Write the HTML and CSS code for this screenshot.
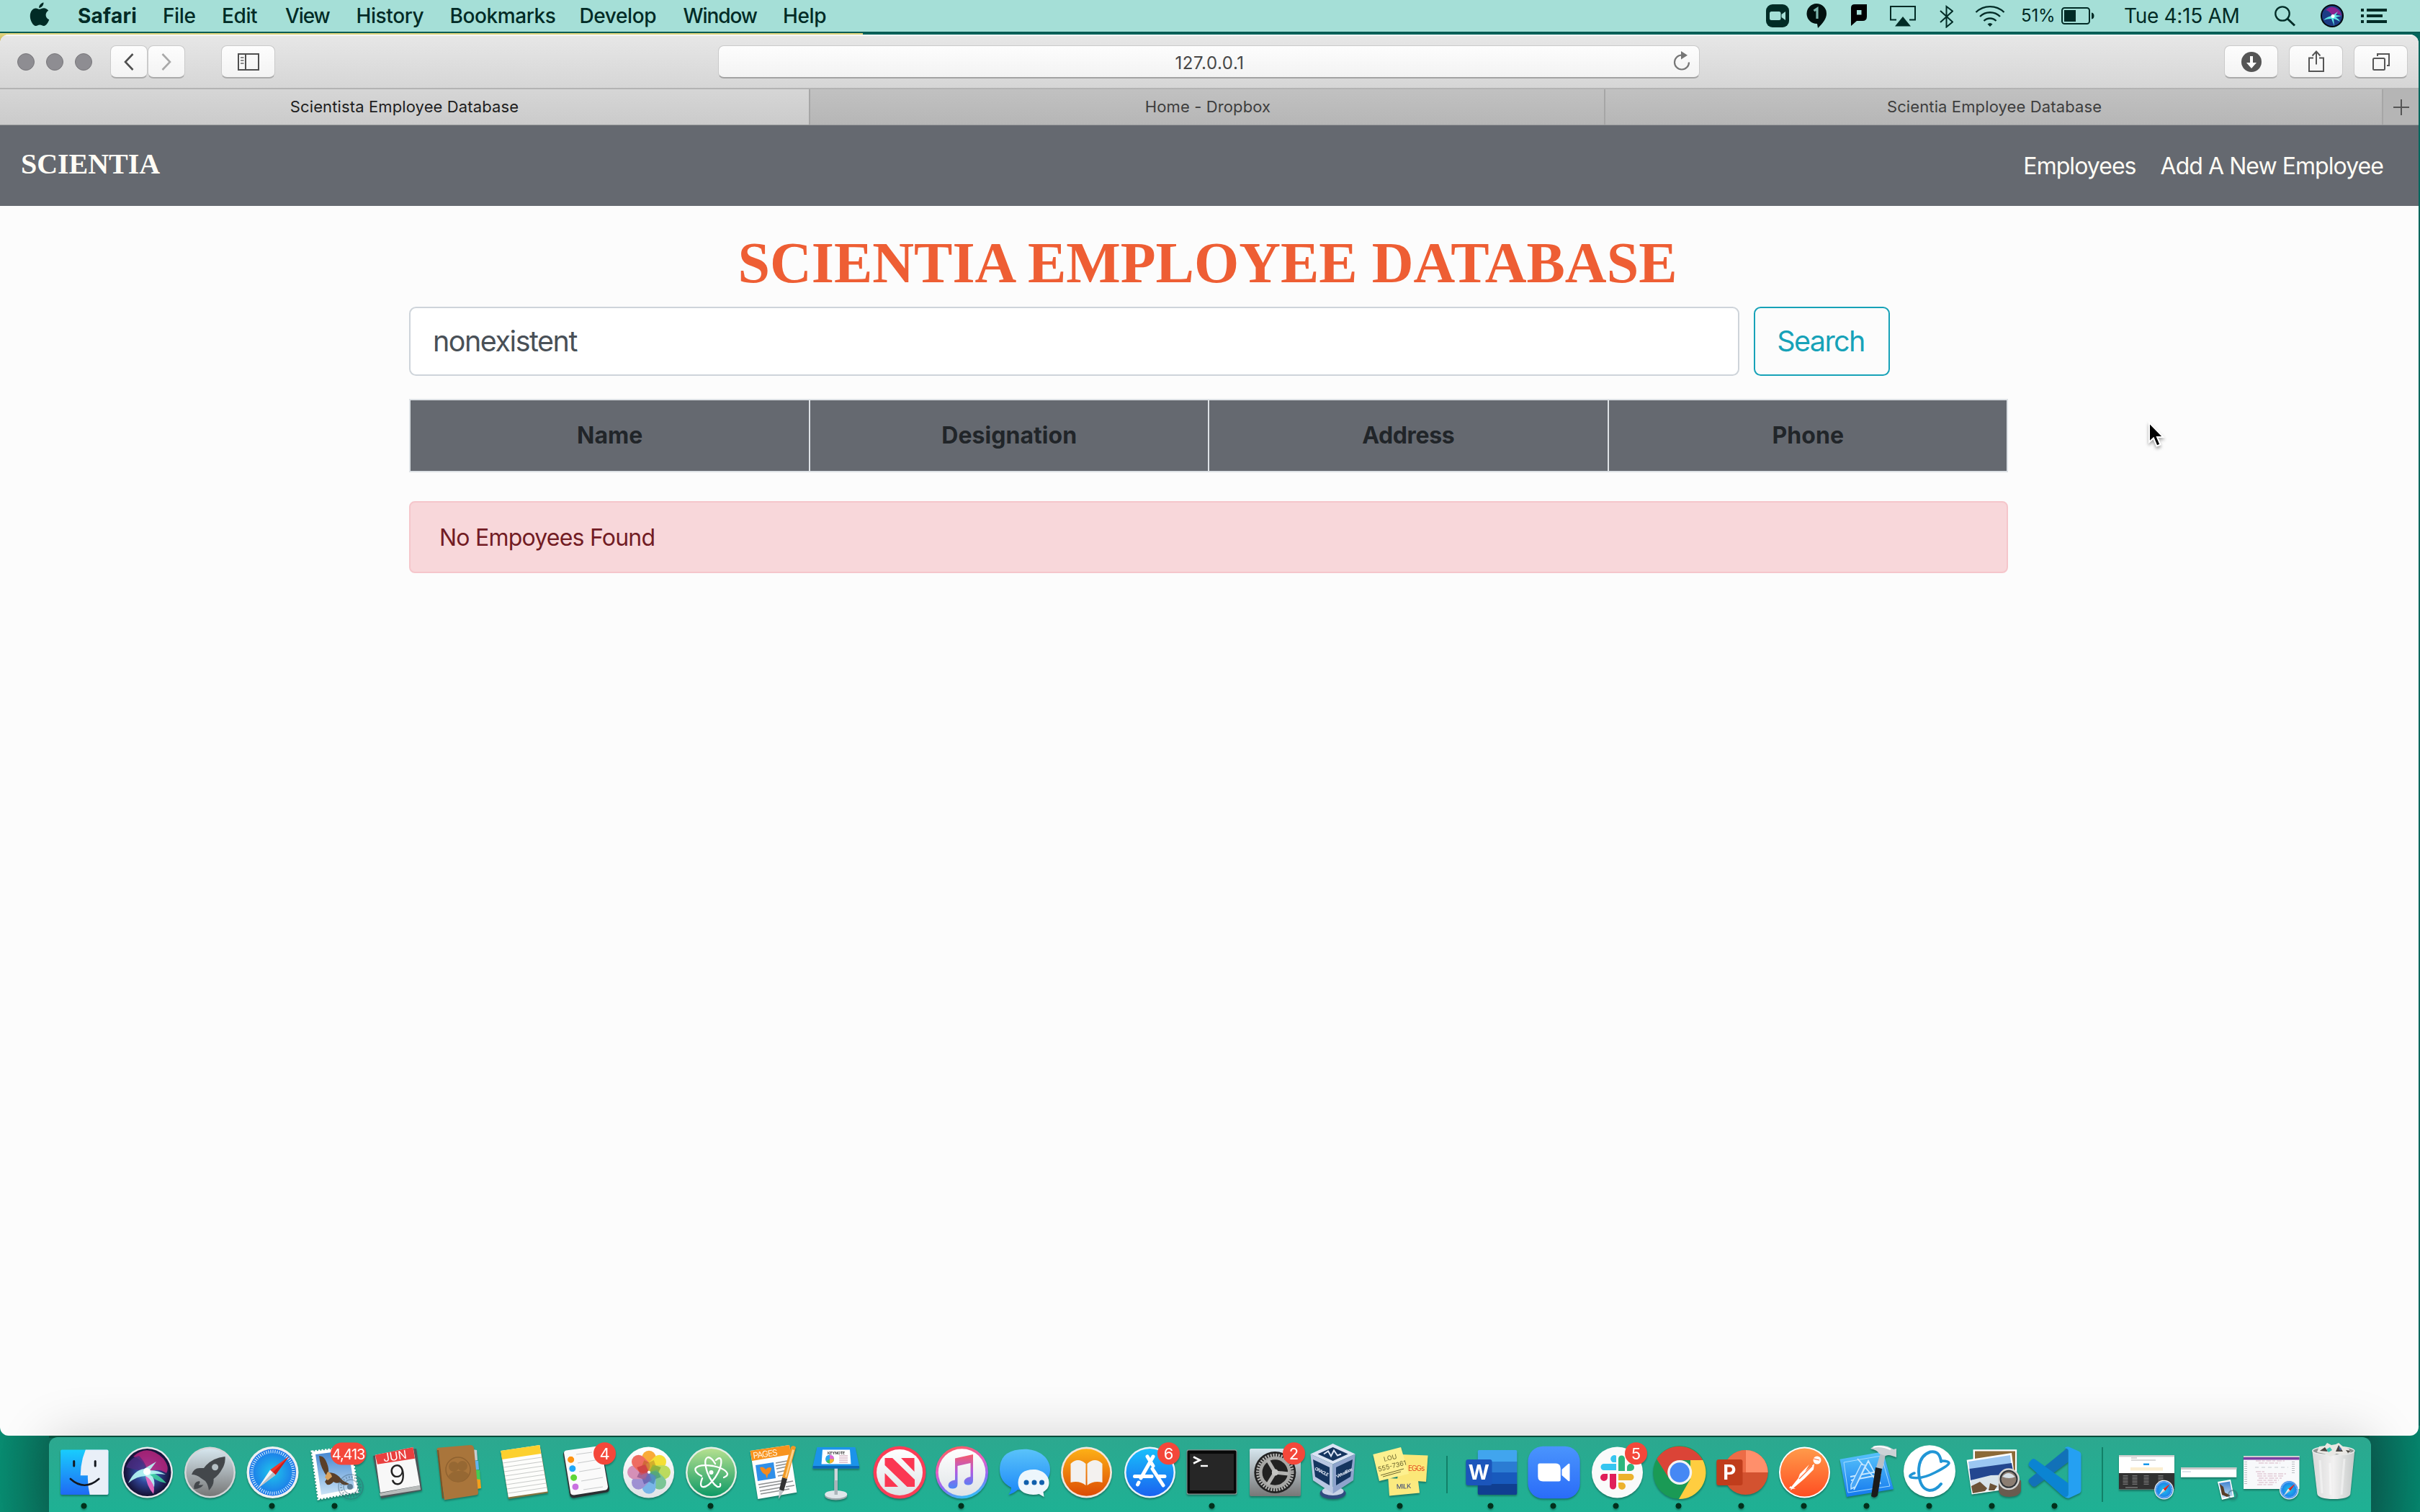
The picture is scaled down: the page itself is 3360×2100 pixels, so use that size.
FILE: index.html
```html
<!DOCTYPE html>
<html lang="en">
<head>
<meta charset="utf-8">
<title>Scientista Employee Database</title>
<link rel="stylesheet" href="styles.css">
</head>
<body>
<header class="menubar">
  <svg class="apple" width="28" height="34" viewBox="0 0 28 34"><path d="M19.500 0.500c.3 3.500-2.800 7.600-6.300 7.500C12.800 4.500 16 1 19.500.5zM14 9.800c1.500 0 3.300-1.500 6-1.500 2.200 0 4.600 1.200 6.200 3.500-5.300 3-4.500 10.400 1 12.500C26 28 23 33 20 33c-2.300 0-3-1.400-5.700-1.400S11 33 8.700 33C5 33 .8 25.800.8 19.500.8 12.500 4.600 8.400 8.600 8.400c2.400 0 3.900 1.400 5.400 1.400z" fill="#012b26"/></svg>
  <nav class="menus">
    <b class="app">Safari</b><span>File</span><span>Edit</span><span class="tight">View</span><span>History</span><span>Bookmarks</span><span>Develop</span><span class="tight">Window</span><span>Help</span>
  </nav>
  <div class="status">
    <svg width="32" height="32" viewBox="0 0 32 32"><rect width="32" height="32" rx="9" fill="#012b26"/><rect x="5" y="10" width="15.500" height="12" rx="2.500" fill="#a5dfd7"/><path d="M21.500 14l5.500-4v12l-5.500-4z" fill="#a5dfd7"/></svg>
    <svg class="s-bubble" width="28" height="34" viewBox="0 0 28 34"><path d="M14 0a14 14 0 0 1 14 14c0 7-5 13-12 20l-1-6A14 14 0 1 1 14 0z" fill="#02110f"/><path d="M10.500 10l4.500-3v14" fill="none" stroke="#7db5ad" stroke-width="3.200"/></svg>
    <svg class="s-p" width="22" height="30" viewBox="0 0 22 30"><path d="M5 0h17v17q0 6-6 6H8l-8 7V5q0-5 5-5z" fill="#000"/><rect x="8" y="8" width="6.500" height="6.500" fill="#a5dfd7"/></svg>
    <svg class="s-air" width="36" height="29" viewBox="0 0 36 29"><path d="M9 19.500H1V1h34v18.500h-8" fill="none" stroke="#012b26" stroke-width="2"/><path d="M18 15l11 13.500H7z" fill="#012b26"/></svg>
    <svg class="s-bt" width="19" height="32" viewBox="0 0 19 32"><path d="M1 8l17 15.500-8.500 7V2L18 8.500 1 24" fill="none" stroke="#012b26" stroke-width="2"/></svg>
    <svg class="s-wifi" width="42" height="30" viewBox="0 0 42 30"><g fill="none" stroke="#012b26" stroke-width="2.400"><path d="M1.500 10a28 28 0 0 1 39 0M7 16a20 20 0 0 1 28 0M12.500 22a12 12 0 0 1 17 0"/></g><path d="M17.500 26.500q3.500-3 7 0L21 30z" fill="#012b26"/></svg>
    <span class="pct">51%</span>
    <svg class="s-batt" width="46" height="24" viewBox="0 0 46 24"><rect x="1" y="1" width="38" height="22" rx="3.500" fill="none" stroke="#012b26" stroke-width="2"/><rect x="4" y="4" width="16" height="16" fill="#012b26"/><path d="M42 7.500q3.500.5 3.500 4.500T42 16.500z" fill="#012b26"/></svg>
    <span class="clock">Tue 4:15 AM</span>
    <svg class="s-find" width="29" height="29" viewBox="0 0 29 29"><circle cx="11" cy="11" r="9.700" fill="none" stroke="#012b26" stroke-width="2.300"/><path d="M18 18l10 9.500" stroke="#012b26" stroke-width="3"/></svg>
    <svg class="s-siri" width="32" height="32" viewBox="0 0 32 32"><circle cx="16" cy="16" r="16" fill="#04090f"/><circle cx="16" cy="16" r="14" fill="#1c3c86"/><path d="M7 8q8-8 17-1 5 4 5 9-5-5-13-1Q12 9 7 8z" fill="#8a2290"/><path d="M4 22q5-5 12-6l8-6-3 5 8 1-8 2q4 2 6 6-5-3-9-4l1 10-4-10q-6 0-11 2z" fill="#5fe6e4"/><circle cx="17" cy="16.500" r="2.500" fill="#fff"/></svg>
    <svg class="s-list" width="36" height="20" viewBox="0 0 36 20" fill="#012b26"><path d="M0 0h4v4H0zM8 0h28v4H8zM0 8h4v4H0zM8 8h22v4H8zM0 16h4v4H0zM8 16h28v4H8z"/></svg>
  </div>
</header>

<main class="window">
  <div class="toolbar">
    <i class="light"></i><i class="light"></i><i class="light"></i>
    <div class="tb back"><svg width="14" height="24" viewBox="0 0 14 24"><path d="M12.500 1L2 12l10.500 11" fill="none" stroke="#4f4f4f" stroke-width="2.600"/></svg></div>
    <div class="tb fwd"><svg width="14" height="24" viewBox="0 0 14 24"><path d="M1.500 1L12 12 1.500 23" fill="none" stroke="#a9a9a9" stroke-width="2.600"/></svg></div>
    <div class="tb side"><svg width="30" height="24" viewBox="0 0 30 24"><path d="M1 1h28v22H1zM11 1v22" fill="none" stroke="#4f4f4f" stroke-width="2"/><path d="M4 6h4.500M4 10h4.500M4 14h4.500" stroke="#8a8a8a" stroke-width="2"/></svg></div>
    <div class="url"><span>127.0.0.1</span>
      <svg width="24" height="28" viewBox="0 0 24 28"><path d="M12 5.500A10 10 0 1 0 22 15.500" fill="none" stroke="#767676" stroke-width="2.200"/><path d="M11 0l9 5.700-9 5.700z" fill="#767676"/></svg></div>
    <div class="tb act dl"><svg width="28" height="28" viewBox="0 0 28 28"><circle cx="14" cy="14" r="14" fill="#555"/><path d="M12 6h4v9h5l-7 8-7-8h5z" fill="#fff"/></svg></div>
    <div class="tb act"><svg class="share" width="22" height="30" viewBox="0 0 22 30"><path d="M7 10.500H1V29h20V10.500h-6M11 19.500V2M5.500 7.500L11 1.500l5.500 6" fill="none" stroke="#555" stroke-width="2"/></svg></div>
    <div class="tb act"><svg width="24" height="24" viewBox="0 0 24 24"><g fill="none" stroke="#555" stroke-width="2"><rect x="1" y="7" width="16" height="16" rx="1.500"/><path d="M7 4V1h16v16h-3"/></g></svg></div>
  </div>
  <div class="tabs">
    <div class="tab on">Scientista Employee Database</div>
    <div class="tab">Home - Dropbox</div>
    <div class="tab last">Scientia Employee Database</div>
    <div class="plus"><svg width="22" height="22" viewBox="0 0 22 22"><path d="M11 0v22M0 11h22" stroke="#555" stroke-width="2"/></svg></div>
  </div>
  <nav class="navbar">
    <a class="brand">SCIENTIA</a>
    <a class="link">Employees</a><a class="link add">Add A New Employee</a>
  </nav>
  <section class="page">
    <h1>SCIENTIA EMPLOYEE DATABASE</h1>
    <form class="search"><div class="field">nonexistent</div><div class="btn">Search</div></form>
    <div class="thead"><div class="wide">Name</div><div class="wide">Designation</div><div>Address</div><div class="wide">Phone</div></div>
    <div class="alert">No Empoyees Found</div>
  </section>
  <svg class="cursor" width="30" height="42" viewBox="0 0 30 42"><path d="M3 2v27l6-5.500 4.500 11 5-2-4.500-10.500h8.500z" fill="#000" stroke="#fff" stroke-width="2"/></svg>
</main>

<footer class="dock">
  <svg class="defs" width="0" height="0">
    <defs>
      <linearGradient id="fb" x2="0" y2="1"><stop stop-color="#19cdfd"/><stop offset="1" stop-color="#1f6af5"/></linearGradient>
      <linearGradient id="gray" x2="0" y2="1"><stop stop-color="#d6e6ee"/><stop offset="1" stop-color="#777"/></linearGradient>
      <linearGradient id="atomg" x2="0" y2="1"><stop stop-color="#b5e08f"/><stop offset="1" stop-color="#0e9a66"/></linearGradient>
      <linearGradient id="musicg" x1=".3" x2=".6" y2="1"><stop stop-color="#fb5c5c"/><stop offset=".4" stop-color="#e560c8"/><stop offset=".7" stop-color="#8a6bf6"/><stop offset="1" stop-color="#2fc3f5"/></linearGradient>
      <linearGradient id="noteg" x2="0" y2="1"><stop stop-color="#f75a68"/><stop offset=".5" stop-color="#b05be0"/><stop offset="1" stop-color="#4a86f7"/></linearGradient>
      <linearGradient id="msg" x2="0" y2="1"><stop stop-color="#5ac3fa"/><stop offset="1" stop-color="#1b87f8"/></linearGradient>
      <linearGradient id="bookg" x2="0" y2="1"><stop stop-color="#fdb016"/><stop offset="1" stop-color="#dc4b04"/></linearGradient>
      <linearGradient id="store" x2="0" y2="1"><stop stop-color="#18bffb"/><stop offset="1" stop-color="#1a62f0"/></linearGradient>
      <linearGradient id="white" x2="0" y2="1"><stop stop-color="#fff"/><stop offset="1" stop-color="#dfe3e6"/></linearGradient>
      <linearGradient id="post" x2="0" y2="1"><stop stop-color="#ff9a4a"/><stop offset="1" stop-color="#ff4e22"/></linearGradient>
      <linearGradient id="xc" x2="0" y2="1"><stop stop-color="#58c4fb"/><stop offset="1" stop-color="#1478ee"/></linearGradient>
      <linearGradient id="zm" x2="0" y2="1"><stop stop-color="#4a94fd"/><stop offset="1" stop-color="#2a6cf8"/></linearGradient>
      <linearGradient id="sky" x2="0" y2="1"><stop stop-color="#3f83cf"/><stop offset="1" stop-color="#c9e2f5"/></linearGradient>
      <linearGradient id="bin" x2="1" y2="0"><stop stop-color="#d8d8d8"/><stop offset=".5" stop-color="#f2f1f1"/><stop offset="1" stop-color="#c5c9c8"/></linearGradient>
      <radialGradient id="comp"><stop stop-color="#1fc6ec"/><stop offset="1" stop-color="#1c74e8"/></radialGradient>
      <radialGradient id="sb"><stop stop-color="#4fb6d6"/><stop offset=".45" stop-color="#31469a"/><stop offset="1" stop-color="#141033"/></radialGradient>
      <g id="siri"><circle cx="43.500" cy="49" r="35.500" fill="#e8e8ee"/><circle cx="43.500" cy="49" r="33" fill="url(#sb)"/><path d="M24 27Q44 8 66 30q9 12 4 20Q58 42 44 49 38 30 24 27z" fill="#c2247e" opacity=".8"/><path d="M14 42Q20 28 32 26q10 10 12 23-16-4-30-7z" fill="#4b2a80" opacity=".8"/><path d="M70 64Q56 48 42 48q12 14 28 16z" fill="#3fe0a0" opacity=".8"/><path d="M40 48q2 20 12 31 4-14-10-31z" fill="#f56ac4" opacity=".9"/><path d="M17 64q8-18 22-20l17-10-9 12q12 0 22 6-14-2-22 0 8 4 6 18-4-12-12-16-12 0-24 10z" fill="#b9fbf6" opacity=".9"/><circle cx="43" cy="48" r="5" fill="#fff"/></g>
      <g id="compass"><circle cx="43.500" cy="49" r="36" fill="#eef0f2"/><circle cx="43.500" cy="49" r="32.500" fill="url(#comp)"/><circle cx="43.500" cy="49" r="29" fill="none" stroke="#d6efff" stroke-width="4.500" stroke-dasharray="1.100 1.930"/><path d="M66 27L40 45.500l7.500 7z" fill="#f2372d"/><path d="M66 27L43.700 49l3.800 3.500z" fill="#c81f1d"/><path d="M23 71l17-25.500 7.500 7z" fill="#f4f4f4"/><path d="M23 71l20.700-22 3.800 3.500z" fill="#b9bec4"/></g>
      <g id="stamp"><path d="M11 20l54-6 10 62-55 10z" fill="#fff" stroke="#fff" stroke-width="3" stroke-dasharray="2.500 2"/><path d="M16 24l46-6 8 53-46 9z" fill="url(#sky)"/><path d="M21 26q6 0 9 6 5 10 4 17 9 0 15 6 5 6 8 7l6 3q-7 4-13-2-6 2-9-1-4 5-9 4l-3-4 4-6Q22 42 21 26z" fill="#5a3f28"/><path d="M33 48q5 2 6 7l-6 5-4-4z" fill="#d8a35f"/></g>
    </defs>
  </svg>
  <div class="apps">
    <svg class="ic run" viewBox="0 0 87 104"><rect x="10" y="17.500" width="66.500" height="62.500" rx="2" fill="url(#fb)"/><path d="M44.800 17.500q-7 17-7.100 35.800h10.200q-.5 14 2.700 26.700H74.500q2 0 2-2v-58.500q0-2-2-2z" fill="#e9eff8"/><path d="M28.700 33.500v6.500M58.200 33.500v6.500" stroke="#14181f" stroke-width="3" stroke-linecap="round"/><path d="M23.800 58q19.500 17.500 39.500 0" fill="none" stroke="#14181f" stroke-width="2.600" stroke-linecap="round"/></svg>
    <svg class="ic" viewBox="0 0 87 104"><use href="#siri"/></svg>
    <svg class="ic" viewBox="0 0 87 104"><circle cx="43.500" cy="49" r="35.500" fill="#d3d6d8"/><circle cx="43.500" cy="49" r="33" fill="url(#gray)"/><path d="M64.500 27q1 9-4 17-4 8-12 14 1 9-6.500 16-1-8-5-13l-6-4q-6-5-13-5 3-9 11-9h6q10-14 29.500-16z" fill="#43474b"/><path d="M29 61q-9 1-7.500 11 9 0 13-6-4 1-7 0 3-2 1.500-5z" fill="#43474b"/><circle cx="50.600" cy="41.700" r="4.500" fill="#b5bfc4"/></svg>
    <svg class="ic run" viewBox="0 0 87 104"><use href="#compass"/></svg>
    <svg class="ic run" viewBox="0 0 87 104"><use href="#stamp"/><g fill="none" stroke="#3b5a70" opacity=".4"><circle cx="65" cy="69" r="17" stroke-width="1.500"/><circle cx="65" cy="69" r="10" stroke-width="1.500"/><circle cx="65" cy="69" r="13.500" stroke-width="3" stroke-dasharray="2 2"/></g><circle cx="64" cy="69" r="4" fill="#3b5a70" opacity=".7"/><rect x="37" y="7.500" width="49.500" height="31" rx="15.500" fill="#f4473a"/><text class="badge four" x="61.500" y="30.500">4,413</text></svg>
    <svg class="ic" viewBox="0 0 87 104"><path d="M9 26l60-10 8 58-57 11z" fill="#4c5558"/><path d="M18 78l56-11 1 6-56 9z" fill="#b9bcbb"/><path d="M11.800 24.700L64.500 14 74 67l-55 10z" fill="#f8f8f8"/><path d="M11.800 24.700L64.500 14 67 29.700 15 37.700z" fill="#e9403f"/><text class="jun" x="40" y="32" transform="rotate(-9 40 32)">JUN</text><text class="nine" x="44" y="66" transform="rotate(-5 44 66)">9</text></svg>
    <svg class="ic" viewBox="0 0 87 104"><path d="M60 17l6 1 1 14-6 1z" fill="#c9ccd0"/><path d="M62 32l6 1 1 12-6 1z" fill="#63b4ee"/><path d="M63 45l7 1 1 13-6 1z" fill="#45cc53"/><path d="M64 58l7 1 1 12-6 1z" fill="#f2a11c"/><path d="M10.400 17q0-2 2-2.300L57 11q4 0 5 4l6 62q0 3-3 3.500L21 87.300z" fill="#a9753b"/><path d="M12 18l7 67" stroke="#7c5326" stroke-width="2"/><g fill="#966833"><circle cx="40" cy="45" r="17" fill="none" stroke="#8f6230" stroke-width="1.500"/><circle cx="34" cy="41" r="7"/><circle cx="46" cy="40" r="7"/><path d="M26 55q4-8 14-8 10-1 15 5-6 10-15 10-9 0-14-7z"/></g></svg>
    <svg class="ic" viewBox="0 0 87 104"><path d="M13 22l54-9 11 64.500-55 8.500z" fill="#857440"/><path d="M12.300 19l54-8 11 64.500-54.500 8z" fill="#fdfdfb"/><path d="M12.300 19l54-8 1.700 12-54 8z" fill="#fcd02e"/><path d="M15 36l54-8M16 42l54-8M17 48l54-8M18 54l54-8M19 60l54-8M20 66l54-8M21 72l54-8M22 78l54-8" stroke="#c9cbc9" stroke-width="1.200"/></svg>
    <svg class="ic" viewBox="0 0 87 104"><path d="M12 24q0-4 3-4.500l46-6q4 0 5 4l10 54q0 4-3 5l-46 8q-5 0-6-4z" fill="#2c2f32"/><path d="M13 22q0-3 3-3.500l44-6q4 0 5 4l9 52q0 4-3 5l-44 7q-5 0-5-4z" fill="#fafafa"/><g stroke="#fff"><circle cx="22.600" cy="31.300" r="5" fill="#fd9312"/><circle cx="24.800" cy="43.700" r="5" fill="#1fa8f7"/><circle cx="26.600" cy="56.300" r="5" fill="#5fd636"/><circle cx="28.900" cy="69" r="5" fill="#c970e0"/></g><path d="M32 36l30-5M34 48l30-5M37 61l30-5M40 73l27-4M30 24l22-3" stroke="#c8cacb" stroke-width="1.200"/><circle cx="69.500" cy="22.800" r="15.500" fill="#f4473a"/><text class="badge" x="69.500" y="31">4</text></svg>
    <svg class="ic" viewBox="0 0 87 104"><circle cx="43.500" cy="49" r="35.500" fill="url(#white)"/><g transform="translate(44 48.700)" opacity=".88"><rect x="-9.500" y="-30" width="19" height="28" rx="9.500" fill="#f9a01e"/><rect x="-9.500" y="-30" width="19" height="28" rx="9.500" fill="#f5dc1b" transform="rotate(45)"/><rect x="-9.500" y="-30" width="19" height="28" rx="9.500" fill="#b5d84a" transform="rotate(90)"/><rect x="-9.500" y="-30" width="19" height="28" rx="9.500" fill="#6cc08a" transform="rotate(135)"/><rect x="-9.500" y="-30" width="19" height="28" rx="9.500" fill="#6aaee8" transform="rotate(180)"/><rect x="-9.500" y="-30" width="19" height="28" rx="9.500" fill="#9585cf" transform="rotate(225)"/><rect x="-9.500" y="-30" width="19" height="28" rx="9.500" fill="#d283b0" transform="rotate(270)"/><rect x="-9.500" y="-30" width="19" height="28" rx="9.500" fill="#ee5a4e" transform="rotate(315)"/><g opacity=".6"><path d="M0 0L-8-9 0-18 8-9z" fill="#b85400" transform="rotate(-22)"/><path d="M0 0L-8-9 0-18 8-9z" fill="#b8830b" transform="rotate(22)"/><path d="M0 0L-8-9 0-18 8-9z" fill="#5d8b10" transform="rotate(68)"/><path d="M0 0L-8-9 0-18 8-9z" fill="#268a55" transform="rotate(112)"/><path d="M0 0L-8-9 0-18 8-9z" fill="#22679a" transform="rotate(158)"/><path d="M0 0L-8-9 0-18 8-9z" fill="#3b3a95" transform="rotate(202)"/><path d="M0 0L-8-9 0-18 8-9z" fill="#763070" transform="rotate(248)"/><path d="M0 0L-8-9 0-18 8-9z" fill="#b50e18" transform="rotate(292)"/></g></g><circle cx="44" cy="48.700" r="2" fill="#fff"/></svg>
    <svg class="ic run" viewBox="0 0 87 104"><circle cx="43.500" cy="49" r="35.500" fill="#e3efe4"/><circle cx="43.500" cy="49" r="33" fill="url(#atomg)"/><g fill="none" stroke="#fff" stroke-width="2.300" stroke-linecap="round"><path d="M30 54Q20 49 21.500 43.500 26 37 46 40q18 4 20 11 0 3-5 5"/><path d="M50 32q5-5 7-1 2 10-8 25-11 15-18 13-4-2 0-12"/><path d="M56 65q1 5-4 4-8-5-14-20-6-19 1-21 5 0 10 9"/></g><circle cx="43.500" cy="49" r="3" fill="#fff"/></svg>
    <svg class="ic" viewBox="0 0 87 104"><path d="M10.600 19L65 11l10.300 65.700L21.300 86z" fill="#fdfdfd"/><path d="M10.600 19L65 11l2 13-54 9z" fill="#f8931d"/><text class="pages" x="15" y="30" transform="rotate(-8 15 30)">PAGES</text><path d="M18 39l25-4 3 22-25 4z" fill="#2f8fe8"/><path d="M24 42q5-2 8 3 4-5 8-2-1 7-5 9l-1 6-2-6q-6-2-8-10z" fill="#f68a1b"/><path d="M46 36l16-3M46 40l16-3M47 44l14-3M48 49l13-3M49 54l11-2M22 66l36-6M23 70l34-6M25 79l40-7M24 75l28-5M60 69l12-2M60 63l10-2" stroke="#8c8f90" stroke-width="1.300"/><path d="M67 14q3-4 7 0L62 58l-7-2z" fill="#f09a26"/><path d="M69 17l3 1-11 38-2-1z" fill="#ffd08a"/><path d="M55 56l7 2-5 17-6-2z" fill="#333"/><path d="M51 73l6 2-7 11z" fill="#c0c4c8"/></svg>
    <svg class="ic" viewBox="0 0 87 104"><path d="M40.500 43h4.500v37h-4.500z" fill="#cfd6da"/><ellipse cx="42.700" cy="81.500" rx="15.500" ry="6" fill="#9aa7ac"/><ellipse cx="42.700" cy="79.500" rx="15.500" ry="5.500" fill="#dfe6ea"/><path d="M40.500 60h4.500v20h-4.500z" fill="#aab4ba"/><path d="M16.400 14h53L75 40v3.500H10.600V40z" fill="#1b93ea"/><path d="M10.600 40H75v3.500H10.600z" fill="#0b66b6"/><path d="M24 17.500h38l1.500 20h-41z" fill="#fff"/><text class="key" x="43" y="24">KEYNOTE</text><circle cx="34" cy="30.500" r="6" fill="#2ca7ee"/><path d="M34 30.500v-6a6 6 0 0 1 6 6z" fill="#e566d0"/><path d="M34 30.500h6a6 6 0 0 1-6 6z" fill="#f7b52a"/><path d="M34 30.500v6a6 6 0 0 1-5-3z" fill="#3cc65a"/><path d="M47 26h12M47 29h12M47 32h12M47 35h12" stroke="#d9b9c9" stroke-width="1.300"/></svg>
    <svg class="ic" viewBox="0 0 87 104"><circle cx="44" cy="49" r="36.500" fill="#fb3d57"/><circle cx="44" cy="49" r="32" fill="url(#white)"/><path d="M23.500 29h10.500l31 30v10H54.500l-31-30zM46 29h18.500v19zM23.500 50v19H42z" fill="#fb3752"/></svg>
    <svg class="ic run" viewBox="0 0 87 104"><circle cx="43.500" cy="49" r="36.500" fill="url(#musicg)"/><circle cx="43.500" cy="49" r="32.800" fill="url(#white)"/><path d="M34 29.500l25-5.500v36q0 6-6 6.500-6 .5-6.500-4 0-6 9-7.500V36l-18 4v25q0 6-6 6.500-6.500.5-7-4.500 0-6 9.500-7.500z" fill="url(#noteg)"/></svg>
    <svg class="ic" viewBox="0 0 87 104"><path d="M43.700 16.700C63 16.700 79 28 79 45S64 74 44 74q-5 0-10-1-5 5-13 7 4-5 4-10Q9 62 9 45 9 17 43.700 16.700z" fill="url(#msg)"/><path d="M56 45c12 0 21.500 8 21.500 18 0 7-4 11-8 13l1 7-7-4q-3 1-8 1-21-1-21-17 1-18 21.500-18z" fill="#edf6fc"/><g fill="#1160ad"><circle cx="46" cy="63" r="3.500"/><circle cx="57" cy="63" r="3.500"/><circle cx="67.500" cy="63" r="3.500"/></g></svg>
    <svg class="ic" viewBox="0 0 87 104"><circle cx="42.500" cy="49" r="35.500" fill="#f1e6dc"/><circle cx="42.500" cy="49" r="32.800" fill="url(#bookg)"/><path d="M20.500 37q10-10 21 0v30q-9-7-21-4zM43.500 37q11-10 21 0v26q-12-3-21 4z" fill="#f3f1ef"/></svg>
    <svg class="ic" viewBox="0 0 87 104"><circle cx="43.500" cy="49" r="35.500" fill="#eaf2fa"/><circle cx="43.500" cy="49" r="33" fill="url(#store)"/><g stroke="#fff" stroke-width="5" stroke-linecap="round"><path d="M48 27L31 57M28 63l-1.500 3M40 27l8 13M47 44l15 23M22.500 54.500H46M56 54.500h8"/></g><circle cx="69.500" cy="22.800" r="15.500" fill="#f4473a"/><text class="badge" x="69.500" y="31">6</text></svg>
    <svg class="ic run" viewBox="0 0 87 104"><rect x="7.500" y="17.300" width="70" height="62.500" rx="2.500" fill="#8b9190"/><rect x="8.500" y="18.500" width="68" height="60" rx="2" fill="#080808"/><rect x="12" y="23" width="61" height="51" fill="#262626"/><path d="M17 27.500l9 4.500-9 4.500" fill="none" stroke="#fff" stroke-width="2.600"/><path d="M27 40h10" stroke="#fff" stroke-width="2.400"/></svg>
    <svg class="ic" viewBox="0 0 87 104"><rect x="8" y="16" width="71" height="66" rx="2" fill="url(#gray)"/><circle cx="43.300" cy="49" r="29" fill="#222"/><circle cx="43.300" cy="49" r="24" fill="none" stroke="#b3b3b1" stroke-width="4.500" stroke-dasharray="2.200 1.570"/><circle cx="43.300" cy="49" r="20" fill="none" stroke="#a7a7a5" stroke-width="4.500"/><path d="M43.300 49l19 2M43.300 49l-10-17M43.300 49L33 66" stroke="#b3b3b1" stroke-width="5"/><circle cx="43.300" cy="49" r="4.500" fill="#c4c4c2"/><circle cx="69.500" cy="22.800" r="15.500" fill="#f4473a"/><text class="badge" x="69.500" y="31">2</text></svg>
    <svg class="ic" viewBox="0 0 87 104"><ellipse cx="36.600" cy="78" rx="18" ry="8" fill="#314c80"/><ellipse cx="36.600" cy="75" rx="15" ry="6" fill="#c9d3e6"/><path d="M36.600 9l31 14.500-31 14L5.500 23.500z" fill="#dbe4f4"/><path d="M5.500 23.500l31.100 14v41L9 60z" fill="#b9c7e2"/><path d="M67.600 23.500l-31 14v41L65 60z" fill="#8ea3cc"/><path d="M36.600 14l21 9.500-21 9.500-21-9.500z" fill="#15355f"/><path d="M24 23.500l6-4 4 7 4-8 5 7 5-2" fill="none" stroke="#dbe4f4" stroke-width="2"/><path d="M9 31l23 11v25L12 55zM64 31L41 42v25l20-12z" fill="#15355f"/><text class="vb" x="11" y="45" transform="rotate(28 11 45)">ORACLE</text><text class="vb" x="42.500" y="57" transform="rotate(-27 42.500 57)">VirtualBox</text></svg>
    <svg class="ic run" viewBox="0 0 87 104"><path d="M26.300 57l41.500 2 2.200 18.500-42 4z" fill="#fbea80"/><path d="M43 24l38.500 1.500L79 62l-40-3z" fill="#fbe778"/><path d="M5.300 24L44 14l11 37-41 10z" fill="#fdf08f"/><g class="scrawl"><text x="21" y="34" transform="rotate(-14 21 34)">LOU</text><text x="13" y="48" transform="rotate(-14 13 48)">555-7361</text><text class="red" x="54" y="47">EGGs</text><text class="blue" x="38" y="72" transform="rotate(-3 38 72)">MILK</text></g><path d="M16 53l32-9M19 55l25-7" stroke="#6d652d"/></svg>
  </div>
  <i class="sep short"></i>
  <div class="apps second">
    <svg class="ic run" viewBox="0 0 87 104"><path d="M26.800 18h50.500q2 0 2 2v14H24.800V20q0-2 2-2z" fill="#41a5ee"/><path d="M24.800 34h54.500v15H24.800z" fill="#2b7cd3"/><path d="M24.800 49h54.500v16H24.800z" fill="#185abd"/><path d="M24.800 65h54.500v13q0 2-2 2H26.800q-2 0-2-2z" fill="#103f91"/><rect x="8.300" y="31" width="36.200" height="36" rx="3" fill="#1b55bb"/><text class="office" x="26.400" y="58.500">W</text></svg>
    <svg class="ic run" viewBox="0 0 87 104"><rect x="7.400" y="12.700" width="72.300" height="72.600" rx="21" fill="url(#zm)"/><path d="M21.300 39q0-2.500 2.500-2.500h22q7 0 7 7V59q0 2.500-2.500 2.500h-22q-7 0-7-7zM54.500 45l9-8q2-1 2 1v22q0 2-2 1l-9-8z" fill="#fff"/></svg>
    <svg class="ic run" viewBox="0 0 87 104"><circle cx="44.500" cy="49" r="35.500" fill="#fafafa"/><g><path d="M43 25.700a5 5 0 1 0-5 9.300h5zM26 37h17v9H26a4.500 4.500 0 0 1 0-9z" fill="#36c5f0"/><path d="M46 30a4.500 4.500 0 0 1 9 0v17h-9zM58 47h5a5 5 0 1 0-5-5z" fill="#2eb67d"/><path d="M46 51h17a4.500 4.500 0 0 1 0 9H46zM46 63h5a5 5 0 1 1-5 5z" fill="#ecb22e"/><path d="M34 51h9v17a4.500 4.500 0 0 1-9 0zM31 51v5a5 5 0 1 1-5-5z" fill="#e01e5a"/></g><circle cx="70.500" cy="22.800" r="15.500" fill="#f4473a"/><text class="badge" x="70.500" y="31">5</text></svg>
    <svg class="ic run" viewBox="0 0 87 104"><circle cx="44.200" cy="49" r="37" fill="#1a9a55"/><path d="M44.200 49L12.200 30.500A37 37 0 0 1 76.200 32H44.200z" fill="#db4437"/><path d="M12.200 30.500l17.300 27 8-15z" fill="#db4437"/><path d="M76.300 32A37 37 0 0 1 43 86l16-28V32z" fill="#ffcd40"/><circle cx="44.200" cy="49" r="17" fill="#f4f4f4"/><circle cx="44.200" cy="49" r="13.700" fill="#4688f4"/></svg>
    <svg class="ic run" viewBox="0 0 87 104"><circle cx="48.700" cy="49" r="31" fill="#d35230"/><path d="M48.700 18a31 31 0 0 1 31 31h-31z" fill="#ff8f6b"/><path d="M48.700 18a31 31 0 0 0-31 31h31z" fill="#ed6c47"/><rect x="8.300" y="31" width="36.200" height="36" rx="3" fill="#c03d1c"/><text class="office" x="26.400" y="58.500">P</text></svg>
    <svg class="ic run" viewBox="0 0 87 104"><circle cx="43.500" cy="49" r="35.500" fill="#fff"/><circle cx="43.500" cy="49" r="33.500" fill="url(#post)"/><circle cx="61" cy="32" r="5.500" fill="#fff"/><path d="M57 37l-19 16-12 15-2 6 5-4 14-12 13-13zM50 38l-13 13-3 8 6-4zM24 68l-2 3 9 1z" fill="#fff"/><path d="M54 40L36 58M56 30l8 2" stroke="#ff6c36" stroke-width="1.200"/></svg>
    <svg class="ic run" viewBox="0 0 87 104"><path d="M5.500 30.700l60-10.500 14.500 52L15 83z" fill="url(#xc)"/><path d="M11 35l52-9 12 42-58 9z" fill="none" stroke="#a8dcff"/><path d="M25 73l20-40 17 32M30 30l30 34M20 55l42-8M21 60l42-8" fill="none" stroke="#c4e7ff" stroke-width="1.800"/><path d="M35 38l6 1-14 30-6 3 0-6z" fill="#49a6f5" stroke="#c4e7ff" stroke-width="1.400"/><path d="M62 22l7 2-4 20-9-2z" fill="#b9c0c6"/><path d="M55 42l9 2-6 37q-4 5-9 1z" fill="#1b1b1b"/><path d="M48 16q8-7 24-3l8 4 4-1v12l-6-2q-5-2-9 0l-9-3q-2-5-12-7z" fill="#cdd2d6"/><path d="M52 14q10-3 24 3" fill="none" stroke="#fff" stroke-width="2"/></svg>
    <svg class="ic run" viewBox="0 0 87 104"><circle cx="43" cy="47.300" r="36" fill="#fff"/><path d="M59 34Q57 18 44 20.500 28 26 28 48q1 24 15 26 9 0 16-9" fill="none" stroke="#2196d6" stroke-width="4" stroke-linecap="round"/><path d="M22 50q-10 4-4 6 14 3 33-7 18-9 19-13 0-3-10-3" fill="none" stroke="#2196d6" stroke-width="3.600" stroke-linecap="round"/></svg>
    <svg class="ic run" viewBox="0 0 87 104"><path d="M16.500 17.300h60.700V60H16.500z" fill="#fff"/><path d="M19 19.500h56V58H19z" fill="#8c6a37"/><path d="M7.600 31.700L70 22l6 48.500-61.300 9z" fill="#fff"/><path d="M10 34l58-9 2 17-58 9z" fill="#9cc7f2"/><path d="M11.500 44L70 36l3 16-60 8z" fill="#23468f"/><path d="M13 60l28-7 31-1 2 16-58 9z" fill="#d9e4ea"/><path d="M14 68l12-6 10 9-3 4-17 3zM40 64l10 4-4 6h-8z" fill="#6d5337"/><path d="M52 60v15q2 8 15 8 14-1 16-8V60z" fill="#6a5b4f"/><circle cx="66" cy="58.300" r="15" fill="#d5d5d3"/><circle cx="66" cy="58.300" r="12.500" fill="#303438"/><circle cx="66" cy="58.300" r="10.500" fill="#8b7d72"/><path d="M57 55q8-10 18 0-8 4-18 0z" fill="#d6dfe6"/></svg>
    <svg class="ic run" viewBox="0 0 87 104"><path d="M61.700 14v20.500L16 68.500q-3 1-5-1l-3.500-4q-2-3 0-5.500z" fill="#1271b8"/><path d="M61.700 84V64L16 31q-3-2-5 0l-3.500 4q-2 3 0 5.500L52 80q5 5 9.700 4z" fill="#0b84d2"/><path d="M56 15.500q4-3 7-1.800L76 19.500q3.500 1.500 3.500 5v49q0 3.500-3.500 5L63 84.500q-3 1-6-1.500 4.700.500 4.700-4V19q0-4-5.700-3.500z" fill="#25a0f2"/></svg>
  </div>
  <i class="sep tall"></i>
  <div class="apps third">
    <svg class="ic" viewBox="0 0 86.700 104"><path d="M5 25h77v48H5z" fill="#fff"/><path d="M5 25h77v2.500H5z" fill="#cfcfcf"/><path d="M5 50h77v22.700H5z" fill="#313131"/><path d="M22 29h8M22 32h34" stroke="#b4b4b4"/><rect x="39" y="36.500" width="8" height="2.500" fill="#1798ea"/><rect x="21" y="42" width="45" height="4.500" fill="#fbeed0"/><path d="M14 53v14M27 53v14M43 53v14M63 53v14" stroke="#777" stroke-width="7" stroke-dasharray="1 1"/><path d="M14 70h17" stroke="#999"/><use href="#compass" transform="translate(51.500 55) scale(.37)"/></svg>
    <svg class="ic" viewBox="0 0 86.700 104"><path d="M4 42h77.300v13.700H4z" fill="#fff"/><path d="M4 42h77.300v3H4z" fill="#c9c9c9"/><path d="M6 48h12" stroke="#b9c9d9"/><path d="M55 62l18-3 5 24-17 4z" fill="#fff"/><path d="M57 64l15-2.500 4 20-14 3z" fill="url(#sky)"/><path d="M58 65l5 4 2 8 8 4-5 2-7-3z" fill="#5a3f28"/><circle cx="76" cy="80" r="6" fill="none" stroke="#3b6a70" opacity=".5" stroke-width="2"/></svg>
    <svg class="ic" viewBox="0 0 86.700 104"><path d="M5 26h77.500v46H5z" fill="#f8f9fb"/><path d="M5 26h77.500v2H5z" fill="#cfcfcf"/><path d="M5 28h77.500v3.500H5z" fill="#7a3fa3"/><path d="M8 34v32M74 34v18" stroke="#b9bcc2" stroke-width="4" stroke-dasharray="1 2"/><path d="M22 33h40M26 36h30M22 48h12M24 51h40M24 54h36M26 57h32M24 60h30M26 63h25M24 66h22" stroke="#d8b4c4" stroke-dasharray="7 1.500 4 2"/><path d="M21 42h46" stroke="#c4c8ce" stroke-dasharray="5 4"/><use href="#compass" transform="translate(52.200 55) scale(.37)"/></svg>
    <svg class="ic" viewBox="0 0 86.700 104"><path d="M13.300 19q29-8 59 0l-6 60q-2 7-23 7t-23-7z" fill="url(#bin)"/><ellipse cx="42.800" cy="19" rx="29" ry="6" fill="#8f9492" stroke="#e9ecec" stroke-width="1.500"/><path d="M20 21l3-8 8-1 3-4 6 3 6-1 4-2 6 5 8 3 3 5-12 4-8-2-8 4-9-4z" fill="#e9e7e3"/><path d="M24 19l7-5 4 6zM46 20l4-9 6 9zM60 18l7 1-4 3z" fill="#4a4642"/><path d="M33 17l5-3 3 4-5 3z" fill="#38c6b4"/><path d="M50 13l4 3-2 3z" fill="#4a73b0"/><path d="M24 32l3 46M38 36l1 44M58 30l-4 50" stroke="#fff" stroke-width="3" opacity=".45"/></svg>
  </div>
</footer>
</body>
</html>
```
FILE: styles.css
```css
* { box-sizing: border-box; }
html, body { margin: 0; height: 100%; }
body {
  width: 3360px; height: 2100px; overflow: hidden;
  display: flex; flex-direction: column;
  font-family: Inter, "Liberation Sans", sans-serif;
  background:
    linear-gradient(#e3d77f, #bfae5c) 0 46px / 1198px 14px no-repeat,
    linear-gradient(#05564f, #03685f) 0 44px / 100% 4px no-repeat,
    linear-gradient(#075440, #075440) 68px 1994px / 3222px 3px no-repeat,
    linear-gradient(90deg, #088b70, #0a6e5a 68px, #0a6355 3292px, #05836b) 0 1980px / 100% 120px no-repeat,
    #04665d;
}

/* system menu bar */
.menubar { flex: none; height: 44px; display: flex; align-items: center; background: #a5dfd7; color: #012b26; font-size: 28px; line-height: 44px; }
.apple { margin: -4px 0 0 41px; }
.menus { display: grid; grid-template-columns: 118px 82px 88px 98.500px 130px 180px 144px 138.500px 70px; margin-left: 39px; font-weight: 450; letter-spacing: -.4px; white-space: nowrap; }
.menus .app { letter-spacing: .25px; }
.menus .tight { letter-spacing: -1.100px; }
.status { margin-left: auto; padding-right: 46px; display: flex; align-items: center; }
.s-bubble { margin-left: 24px; }
.s-p { margin: -3px 0 0 34px; }
.s-air { margin-left: 32px; }
.s-bt { margin: 2px 0 0 33px; }
.s-wifi { margin-left: 30px; }
.pct { margin-left: 22px; width: 48px; font-size: 24px; letter-spacing: -.2px; }
.s-batt { margin-left: 8px; }
.clock { margin-left: 41px; width: 163px; letter-spacing: -.3px; white-space: nowrap; }
.s-find { margin-left: 46px; }
.s-siri { margin-left: 35px; }
.s-list { margin-left: 24px; }

/* browser window */
.window { position: relative; flex: none; width: 3358px; height: 1946px; margin-top: 4px; background: #fcfcfc; border-radius: 12px; overflow: hidden; display: flex; flex-direction: column; }
.toolbar { flex: none; height: 76px; display: flex; align-items: center; background: linear-gradient(#e7e7e7, #d6d6d6); border-bottom: 2px solid #b3b3b3; padding: 2px 15px 0 24px; box-shadow: inset 0 2px #f6f6f6; }
.light { width: 24px; height: 24px; border-radius: 50%; background: #8e8d92; border: 1px solid #77767a; margin-right: 16px; }
.tb { height: 46px; border-radius: 8px; background: linear-gradient(#fdfdfd, #f3f3f3); border: 1px solid #cacaca; border-bottom: 2px solid #ababab; display: flex; align-items: center; justify-content: center; }
.back { width: 52px; margin-left: 9px; }
.fwd { width: 52px; }
.side { width: 75px; margin-left: 50px; }
.url { width: 1363px; height: 46px; margin-left: 615px; padding-left: 4px; border-radius: 8px; background: linear-gradient(#fdfdfd, #f3f3f3); border: 1px solid #cacaca; border-bottom: 2px solid #a3a3a3; display: flex; align-items: center; justify-content: center; font-size: 24px; letter-spacing: .55px; color: #474747; }
.url span { margin: 4px auto 0; padding-left: 34px; }
.url svg { margin: -2px 12px 0 0; }
.act { width: 75px; margin-left: 15px; }
.dl { margin-left: auto; }
.share { margin-top: -2px; }
.tabs { flex: none; height: 50px; display: grid; grid-template-columns: 1125px 1104px 1080px 1fr; border-bottom: 2px solid #9c9e9f; font-size: 22px; line-height: 49px; letter-spacing: .12px; color: #3e3e3e; text-align: center; }
.tab { background: linear-gradient(#c1c1c1, #b6b6b6); border-right: 2px solid #a6a6a6; padding-left: 2px; white-space: nowrap; }
.on { background: linear-gradient(#d6d6d6, #cbcbcb); color: #1e1e1e; padding: 0; }
.plus { display: flex; align-items: center; justify-content: center; background: #b5b5b5; }

/* site */
.navbar { flex: none; height: 112px; display: flex; align-items: center; background: #656970; color: #fffcf5; padding: 0 49px 0 29px; font-size: 32px; letter-spacing: -.95px; }
.brand { margin: -5px auto 0 0; font: bold 40px "Liberation Serif", serif; letter-spacing: -.05px; }
.link.add { margin-left: 34px; }
.page { width: 2220px; margin: 31px 0 0 568px; display: flex; flex-direction: column; }
h1 { margin: 0 3px 13px 0; font: bold 80px/96px "Liberation Serif", serif; letter-spacing: 0; color: #ee5e34; text-align: center; white-space: nowrap; }
.search { display: flex; gap: 20px; height: 96px; margin: 0 0 32px; font-size: 39.500px; line-height: 93px; }
.field { width: 1847px; border: 2px solid #ced4da; border-radius: 9.600px; background: #fff; padding-left: 31px; color: #495057; letter-spacing: -1.500px; }
.btn { width: 189px; border: 2px solid #17a2b8; border-radius: 9.600px; color: #17a2b8; text-align: center; letter-spacing: -1.600px; padding-right: 3px; }
.thead { display: grid; grid-template-columns: repeat(4, 1fr); gap: 2px; padding: 2px 2px 4px; height: 102px; background: #dee2e6; font-weight: 700; font-size: 32px; line-height: 98px; text-align: center; color: #212529; letter-spacing: -.4px; }
.thead div { background: #656970; }
.thead .wide { letter-spacing: .05px; padding-left: 1px; }
.alert { margin-top: 40px; height: 100px; border: 2px solid #f5c6cb; border-radius: 8px; background: #f8d7da; color: #721c24; font-size: 32px; line-height: 98px; padding-left: 40px; letter-spacing: -.78px; }
.cursor { position: absolute; left: 2981px; top: 537px; filter: drop-shadow(0 3px 2px rgba(0,0,0,.35)); }

/* dock */
.dock { position: relative; flex: none; width: 3224px; height: 104px; margin: 2px 0 0 68px; padding-left: 5.500px; display: flex; border-radius: 12px 12px 0 0; background: linear-gradient(#2ca88f, #1eb194); box-shadow: 0 0 72px rgba(0,0,0,.18); }
.defs { position: absolute; }
.apps { display: grid; grid-template-columns: repeat(22, 87.050px); }
.second { grid-template-columns: repeat(10, 87px); }
.third { grid-template-columns: repeat(4, 86.700px); }
.ic { width: 100%; height: 104px; overflow: visible; filter: drop-shadow(0 2px 1px rgba(0,0,0,.3)); }
.run { background: radial-gradient(circle at 42.500px 95.500px, #02301c 3.600px, transparent 4.400px); }
.sep { width: 2px; background: #128068; }
.short { height: 52px; margin: 26px 17px 0 19px; }
.tall { height: 76px; margin: 14px 17.500px 0 21px; }
text { font-family: Inter, "Liberation Sans", sans-serif; }
.badge { font-size: 22px; fill: #fff; text-anchor: middle; }
.badge.four { font-size: 20px; letter-spacing: -1.100px; }
.jun { font-size: 16px; fill: #fff; text-anchor: middle; }
.nine { font-size: 38px; font-weight: 300; fill: #222; text-anchor: middle; }
.pages { font-size: 12px; fill: #fff3de; letter-spacing: -1px; }
.key { font-size: 5px; font-weight: 700; fill: #333; text-anchor: middle; }
.vb { font-size: 6px; font-weight: 700; fill: #e4ebf7; letter-spacing: -.7px; }
.office { font-size: 28px; font-weight: 700; fill: #fff; text-anchor: middle; }
.scrawl text { font-size: 9px; fill: #6d652d; }
.scrawl .red { fill: #e2481e; font-size: 10px; letter-spacing: -1px; }
.scrawl .blue { fill: #33417a; letter-spacing: -.5px; }
```
